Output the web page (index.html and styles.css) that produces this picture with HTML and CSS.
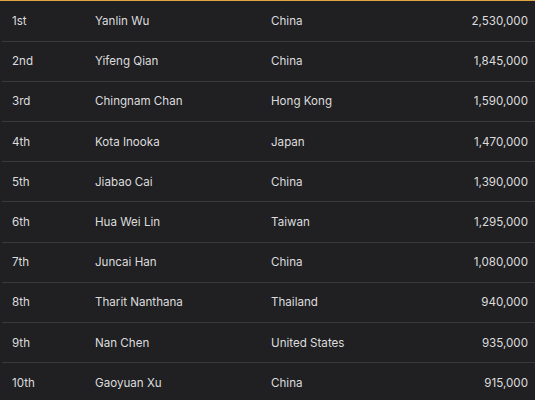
FILE: index.html
```html
<!DOCTYPE html>
<html>
<head>
<meta charset="utf-8">
<link rel="stylesheet" href="styles.css">
</head>
<body>
<div class="wrap">
<table class="rank">
<tbody>
<tr><td class="pos">1st</td><td class="name">Yanlin Wu</td><td class="country">China</td><td class="amt">2,530,000</td></tr>
<tr><td class="pos">2nd</td><td class="name">Yifeng Qian</td><td class="country">China</td><td class="amt">1,845,000</td></tr>
<tr><td class="pos">3rd</td><td class="name">Chingnam Chan</td><td class="country">Hong Kong</td><td class="amt">1,590,000</td></tr>
<tr><td class="pos">4th</td><td class="name">Kota Inooka</td><td class="country">Japan</td><td class="amt">1,470,000</td></tr>
<tr><td class="pos">5th</td><td class="name">Jiabao Cai</td><td class="country">China</td><td class="amt">1,390,000</td></tr>
<tr><td class="pos">6th</td><td class="name">Hua Wei Lin</td><td class="country">Taiwan</td><td class="amt">1,295,000</td></tr>
<tr><td class="pos">7th</td><td class="name">Juncai Han</td><td class="country">China</td><td class="amt">1,080,000</td></tr>
<tr><td class="pos">8th</td><td class="name">Tharit Nanthana</td><td class="country">Thailand</td><td class="amt">940,000</td></tr>
<tr><td class="pos">9th</td><td class="name">Nan Chen</td><td class="country">United States</td><td class="amt">935,000</td></tr>
<tr><td class="pos">10th</td><td class="name">Gaoyuan Xu</td><td class="country">China</td><td class="amt">915,000</td></tr>
</tbody>
</table>
</div>
</body>
</html>
```
FILE: styles.css
```css
html, body {
  margin: 0;
  padding: 0;
  background: #202022;
}
body {
  font-family: Inter, "Noto Sans", sans-serif;
  font-size: 11.6px;
  color: #dcdcde;
}
.wrap {
  border-top: 1px solid #e0a545;
  padding-left: 2px;
}
.rank {
  width: 100%;
  border-collapse: collapse;
}
.rank tr {
  height: 40.2px;
  border-bottom: 1px solid #3a3a3c;
}
.rank tr:last-child {
  border-bottom: none;
}
.rank td {
  padding: 0;
  vertical-align: middle;
  white-space: nowrap;
}
.pos {
  width: 83px;
  padding-left: 10px !important;
}
.name {
  width: 176px;
}
.amt {
  text-align: right;
  padding-right: 7px !important;
}
```
